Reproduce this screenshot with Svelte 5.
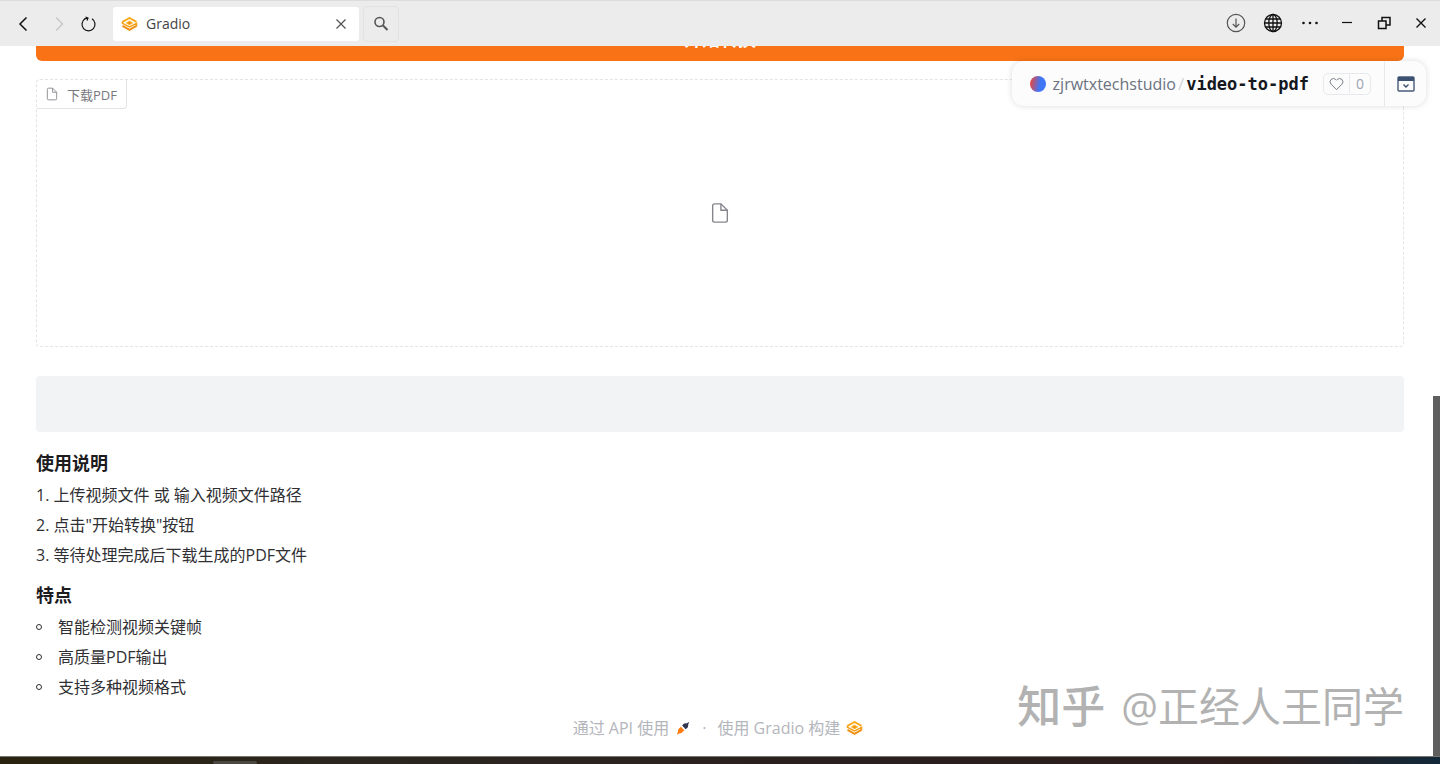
<script>
    const steps = [
        "上传视频文件 或 输入视频文件路径",
        '点击"开始转换"按钮',
        "等待处理完成后下载生成的PDF文件",
    ];
    const features = ["智能检测视频关键帧", "高质量PDF输出", "支持多种视频格式"];
</script>

{#snippet gradioLogo()}
    <svg class="logo" viewBox="0 0 16 14" aria-hidden="true">
        <path d="M1 4.9 8 1l7 3.9" fill="none" stroke="#fba91c" stroke-width="1.9" />
        <path d="M1 8.9 8 12.8l7-3.9" fill="none" stroke="#ef9014" stroke-width="2" />
        <path d="M1 4.4v2L8 10l7-3.6v3" fill="none" stroke="#f79f18" stroke-width="1.5" />
        <path d="M8 3.6 12 6 8 8.2 4 6Z" fill="#fdb733" />
        <path d="M8 5 9.8 6 8 7 6.2 6Z" fill="#e8820c" />
    </svg>
{/snippet}

{#snippet fileIcon()}
    <svg class="file" viewBox="0 0 24 24" aria-hidden="true">
        <path d="M13 2H6a2 2 0 0 0-2 2v16a2 2 0 0 0 2 2h12a2 2 0 0 0 2-2V9Z" />
        <path d="M13 2v7h7" />
    </svg>
{/snippet}

<div class="window">
    <header class="toolbar">
        <nav class="nav">
            <button aria-label="后退">
                <svg viewBox="0 0 20 20"><path d="M13.5 3.5 7 10l6.5 6.5" stroke-width="1.5" /></svg>
            </button>
            <button class="disabled" aria-label="前进" disabled>
                <svg viewBox="0 0 20 20"><path d="m10 3.5 6.5 6.5-6.5 6.5" stroke-width="1.5" /></svg>
            </button>
            <button aria-label="刷新">
                <svg viewBox="0 0 20 20">
                    <path d="M6 4.8a6.5 6.5 0 1 0 7 0" stroke-width="1.2" />
                    <path d="M5.5 4.8 9 4M6.5 3 9 4l-1 2.5" stroke-width="1.2" />
                </svg>
            </button>
        </nav>
        <div class="tab">
            {@render gradioLogo()}
            <span>Gradio</span>
            <button aria-label="关闭标签页">
                <svg viewBox="0 0 20 20"><path d="m5.5 5.5 9 9M14.5 5.5l-9 9" stroke-width="1.3" /></svg>
            </button>
        </div>
        <button class="search" aria-label="搜索">
            <svg viewBox="0 0 20 20"><circle cx="8.5" cy="8" r="4.5" stroke-width="1.6" /><path d="m12 11.5 4.5 4.5" stroke-width="2" /></svg>
        </button>
        <div class="actions">
            <button class="download" aria-label="下载">
                <svg viewBox="0 0 20 20"><circle cx="10" cy="10" r="8.7" stroke-width="1.2" /><path d="M10 5.5v8.5M6.8 11l3.2 3.2 3.2-3.2" stroke-width="1.2" /></svg>
            </button>
            <button aria-label="语言">
                <svg viewBox="0 0 20 20">
                    <g stroke-width="1.3">
                        <circle cx="10" cy="10" r="8.5" />
                        <ellipse cx="10" cy="10" rx="4.2" ry="8.5" />
                        <path d="M10 1.5v17M1.5 10h17M3 6h14M3 14h14" />
                    </g>
                </svg>
            </button>
            <button aria-label="更多">
                <svg viewBox="0 0 20 20"><g fill="#111" stroke="none"><circle cx="3.5" cy="10" r="1.3" /><circle cx="10" cy="10" r="1.3" /><circle cx="16.5" cy="10" r="1.3" /></g></svg>
            </button>
            <button aria-label="最小化">
                <svg viewBox="0 0 20 20"><path d="M5 9.5h10" stroke-width="1.2" /></svg>
            </button>
            <button aria-label="还原">
                <svg viewBox="0 0 20 20"><path d="M4.5 8h7.5v7.5H4.5ZM8 8V4.5h8V12h-4" stroke-width="1.5" /></svg>
            </button>
            <button aria-label="关闭">
                <svg viewBox="0 0 20 20"><path d="m5.5 5.5 9 9M14.5 5.5l-9 9" stroke-width="1.4" /></svg>
            </button>
        </div>
    </header>

    <main>
        <button class="convert">开始转换</button>

        <section class="download-box">
            <div class="label">{@render fileIcon()}<span>下载PDF</span></div>
            {@render fileIcon()}
        </section>

        <div class="status"></div>

        <section class="prose">
            <h3>使用说明</h3>
            <ol>
                {#each steps as step}
                    <li>{step}</li>
                {/each}
            </ol>
            <h3>特点</h3>
            <ul>
                {#each features as feature}
                    <li>{feature}</li>
                {/each}
            </ul>
        </section>

        <footer>
            <a href="#api">
                通过 API 使用
                <svg class="rocket" viewBox="0 0 16 16" aria-hidden="true">
                    <path d="M2 14.5 2.4 9.8 5.5 6.6l4 4-3.2 3.1Z" fill="#ff7c10" />
                    <path d="m1.5 15 3-3" stroke="#ff7c10" stroke-width="1.5" />
                    <path d="m7 5.2 2.2-2.4 3.3-.2L15 .8 14 4l-.4 3-2.6 2.4Z" fill="#323650" />
                </svg>
            </a>
            <span>·</span>
            <a href="#gradio">使用 Gradio 构建 {@render gradioLogo()}</a>
        </footer>

        <div class="space-card">
            <div class="space-info">
                <i class="avatar"></i>
                <a class="owner" href="#owner">zjrwtxtechstudio</a>
                <span class="slash">/</span>
                <a class="repo" href="#repo">video-to-pdf</a>
                <button class="likes" aria-label="点赞">
                    <svg viewBox="0 0 16 16"><path d="M8 14 2.2 8.2a3.6 3.6 0 0 1 0-5 3.6 3.6 0 0 1 5 0L8 4l.8-.8a3.6 3.6 0 0 1 5 0 3.6 3.6 0 0 1 0 5Z" /></svg>
                    <span>0</span>
                </button>
            </div>
            <button class="collapse" aria-label="收起">
                <svg viewBox="0 0 18 16">
                    <rect x="1" y="1" width="16" height="14" rx="1" fill="none" stroke="#475b78" stroke-width="1.4" />
                    <path d="M1 1h16v4H1Z" fill="#3c516f" />
                    <path d="m6.5 8.5 2.5 2.5 2.5-2.5" fill="none" stroke="#3c516f" stroke-width="1.4" />
                </svg>
            </button>
        </div>

        <div class="watermark"><b>知乎</b><span>@正经人王同学</span></div>
        <div class="scroll-thumb"></div>
    </main>

    <div class="taskbar"><i></i></div>
</div>

<style>
    :global(body) {
        background: #fff;
    }

    .window {
        display: flex;
        flex-direction: column;
        min-height: 100vh;
        font-family: "Open Sans", "Noto Sans CJK SC", sans-serif;
        font-size: 16px;
        color: #303034;
    }

    button {
        display: flex;
        align-items: center;
        justify-content: center;
        padding: 0;
        border: 0;
        background: none;
        font-family: inherit;
    }

    a {
        color: inherit;
        text-decoration: none;
    }

    .toolbar {
        display: flex;
        align-items: center;
        box-sizing: border-box;
        height: 46px;
        padding: 0 9px 0 13px;
        border-top: 1px solid #dcdcde;
        background: #ececec;
    }

    .toolbar button svg {
        width: 20px;
        height: 20px;
        fill: none;
        stroke: #111;
    }

    .nav {
        display: flex;
        gap: 13px;
        margin-right: 14px;
    }

    .nav .disabled svg {
        stroke: #c8c8c8;
    }

    .tab {
        display: flex;
        align-items: center;
        box-sizing: border-box;
        width: 246px;
        height: 34px;
        padding: 0 8px;
        border-radius: 3px;
        background: #fff;
        font-size: 14px;
        color: #444;
    }

    .tab span {
        flex: 1;
        margin-left: 8px;
    }

    .toolbar .tab button svg,
    .toolbar .search svg {
        stroke: #555;
    }

    .logo {
        width: 17px;
        height: 14px;
    }

    .search {
        width: 36px;
        height: 36px;
        margin-left: 4px;
        border: 1px solid #e2e2e2;
        border-radius: 4px;
    }

    .actions {
        display: flex;
        gap: 17px;
        margin-left: auto;
        padding-bottom: 2px;
    }

    .toolbar .download svg {
        stroke: #555;
    }

    main {
        position: relative;
        flex: 1;
        display: flex;
        flex-direction: column;
        overflow: hidden;
        padding: 0 36px;
    }

    .convert {
        flex: none;
        height: 46px;
        margin-top: -31px;
        border-radius: 6px;
        background: #f97316;
        font-size: 18px;
        font-weight: 700;
        color: #fff;
    }

    .file {
        width: 24px;
        height: 22px;
        fill: none;
        stroke: #85858c;
        stroke-width: 1.5;
    }

    .download-box {
        position: relative;
        display: flex;
        align-items: center;
        justify-content: center;
        height: 266px;
        margin-top: 18px;
        border: 1px dashed #e4e4e7;
        border-radius: 4px;
    }

    .label {
        position: absolute;
        top: 0;
        left: 0;
        display: flex;
        align-items: center;
        gap: 8px;
        height: 28px;
        padding: 0 9px 0 8px;
        border: solid #e4e4e7;
        border-width: 0 1px 1px 0;
        border-radius: 0 0 4px 0;
        font-size: 13px;
        color: #77777e;
    }

    .label .file {
        width: 14px;
        height: 14px;
    }

    .status {
        height: 56px;
        margin-top: 29px;
        border-radius: 4px;
        background: #f2f3f5;
    }

    .prose {
        margin-top: 18px;
    }

    h3 {
        margin: 0;
        font-size: 18px;
        font-weight: 700;
        line-height: 26px;
        color: #1c1c1f;
    }

    ol,
    ul {
        margin: 4px 0 12px;
        padding: 0;
        line-height: 30px;
    }

    ol {
        list-style-position: inside;
    }

    ul {
        list-style: none;
    }

    ul li {
        display: flex;
        align-items: center;
        gap: 16px;
    }

    ul li::before {
        content: "";
        width: 4px;
        height: 4px;
        border: 1px solid #303034;
        border-radius: 50%;
    }

    footer {
        display: flex;
        justify-content: center;
        gap: 11px;
        padding-right: 4px;
        line-height: 28px;
        color: #b4b6bc;
    }

    footer a {
        display: flex;
        align-items: center;
        gap: 6px;
    }

    .rocket {
        width: 16px;
        height: 14px;
    }

    .space-card {
        position: absolute;
        top: 15px;
        right: 14px;
        display: flex;
        height: 45px;
        border-radius: 12px;
        background: #fcfcfd;
        box-shadow: 0 0 6px rgba(0, 0, 0, 0.14);
    }

    .space-info {
        display: flex;
        align-items: center;
        padding: 0 13px 0 18px;
        font-size: 17px;
    }

    .avatar {
        width: 16px;
        height: 16px;
        margin-right: 7px;
        border-radius: 50%;
        background: linear-gradient(100deg, #e0484a 10%, #3f76f5 60%);
    }

    .owner {
        font-size: 16px;
        color: #6b7280;
    }

    .slash {
        margin: 0 2px;
        color: #d1d5db;
    }

    .repo {
        font-family: "DejaVu Sans Mono", monospace;
        font-weight: 700;
        color: #15181f;
    }

    .likes {
        height: 22px;
        margin-left: 14px;
        border: 1px solid #e8e9ec;
        border-radius: 5px;
        font-size: 14px;
        color: #9ca3af;
    }

    .likes svg {
        width: 15px;
        height: 16px;
        padding: 0 5px;
        fill: none;
        stroke: #70757f;
    }

    .likes span {
        padding: 0 6px;
        border-left: 1px solid #e8e9ec;
    }

    .collapse {
        width: 42px;
        border-left: 1px solid #e8e9ec;
    }

    .collapse svg {
        width: 18px;
        height: 16px;
    }

    .watermark {
        position: absolute;
        right: 36px;
        bottom: 20px;
        display: flex;
        align-items: center;
        gap: 16px;
        font-size: 41px;
        line-height: 60px;
        color: #b2b2b2;
    }

    .watermark b {
        font-size: 44px;
        font-weight: 500;
    }

    .scroll-thumb {
        position: absolute;
        right: 0;
        bottom: 0;
        width: 7px;
        height: 360px;
        background: #5f5f5f;
    }

    .taskbar {
        height: 7px;
        padding: 0 213px;
        border-top: 1px solid #77776f;
        background: linear-gradient(90deg, #29230f, #2b2620 25%, #2a201f 60%, #2c1d1b 88%, #12293a);
    }

    .taskbar i {
        display: block;
        width: 44px;
        height: 3px;
        margin-top: 4px;
        border-radius: 3px;
        background: #4b4742;
    }
</style>
